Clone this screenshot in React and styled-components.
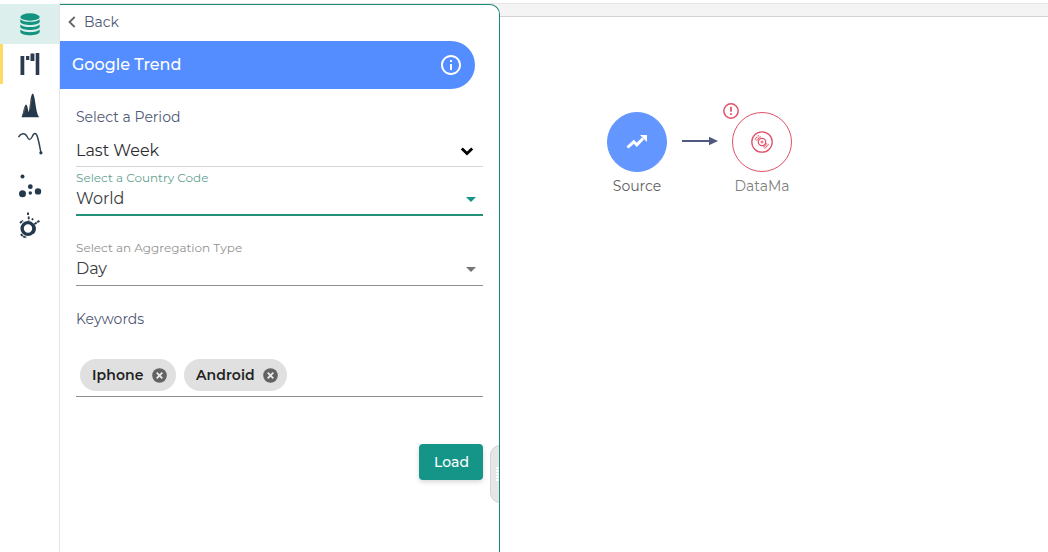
import React from "react";
import styled, { createGlobalStyle } from "styled-components";

const Global = createGlobalStyle`
  * { box-sizing: border-box; }
  body { margin: 0; background: #fff; font-family: Montserrat, Inter, "Liberation Sans", sans-serif; overflow: hidden; }
`;
const Page = styled.div`
  display: flex; height: 552px; width: 1048px; padding-top: 3px; overflow: hidden;
`;
const Rail = styled.nav`
  width: 60px; display: flex; flex-direction: column; border-right: 1px solid #e4e4e8; padding-top: 1px;
`;
const RailItem = styled.div`
  height: 40px; display: flex; align-items: center; justify-content: center;
  background: ${(p) => (p.$active ? "#dcefec" : "transparent")};
  border-left: 3px solid ${(p) => (p.$marked ? "#ffd966" : "transparent")};
  border-radius: ${(p) => (p.$marked ? "0 2px 2px 0" : "0")};
  svg { display: block; margin-left: -2px; margin-top: ${(p) => p.$drop || 0}px; }
`;
const Main = styled.div`
  flex: 1; position: relative; display: flex;
`;
const Panel = styled.section`
  width: 440px; margin-top: 1px; height: 560px; position: relative; overflow: hidden; z-index: 1;
  border-top: 1px solid #1c8a78; border-right: 1px solid #1c8a78; border-top-right-radius: 10px; background: #fff;
`;
const TopStrip = styled.div`
  position: absolute; left: 0; right: 0; top: 0; height: 14px;
  background: #f4f4f5; border-top: 1px solid #e6e6e8; border-bottom: 1px solid #d2d2d4;
`;
const Text = styled.span`
  display: block; white-space: nowrap;
  font-size: ${(p) => p.$size || 14}px; line-height: ${(p) => p.$lh || 20}px;
  font-weight: ${(p) => p.$weight || 400}; color: ${(p) => p.$color || "#505976"};
  letter-spacing: ${(p) => p.$track || 0}px;
`;
const BackRow = styled.div`
  height: 36px; display: flex; align-items: center; padding: 0 0 2px 8px; gap: 8px;
`;
const Header = styled.header`
  width: 415px; height: 48px; background: #548dff; border-radius: 0 24px 24px 0;
  display: flex; align-items: center; justify-content: space-between; padding: 0 12px;
`;
const Body = styled.div`
  padding: 18px 16px 0; display: flex; flex-direction: column;
`;
const Field = styled.div`
  height: ${(p) => p.$h}px; padding-top: ${(p) => p.$pt || 0}px;
  border-bottom: ${(p) => p.$bw || 1}px solid ${(p) => p.$line};
`;
const Value = styled.div`
  display: flex; justify-content: space-between; align-items: center; padding-right: ${(p) => p.$pr || 7}px;
  padding-top: 1px;
`;
const Chips = styled.div`
  display: flex; gap: 8px; height: 38px; margin-top: 7px; padding-left: 4px; border-bottom: 1px solid #8e8e8e;
`;
const Chip = styled.div`
  height: 32px; width: ${(p) => p.$w}px; border-radius: 16px; background: #e0e0e0; padding: 0 9.5px 0 12px;
  display: flex; align-items: center; justify-content: space-between;
`;
const LoadButton = styled.button`
  align-self: flex-end; width: 64px; height: 36px; margin-top: 47px; padding: 0 0 0 1px; border: 0; border-radius: 4px;
  background: #159588; font-family: inherit; display: flex; align-items: center; justify-content: center;
  box-shadow: 0 2px 5px rgba(0, 0, 0, 0.16);
`;
const Handle = styled.div`
  position: absolute; left: 430px; top: 440px; width: 20px; height: 58px; border-radius: 10px;
  background: #e6e6e6; border: 1px solid #d3d3d3; padding: 21px 0 0 5px;
`;
const Grip = styled.div`
  width: 10px; height: 15px;
  background: repeating-linear-gradient(#fff 0 2px, #e6e6e6 2px 3px);
`;
const Canvas = styled.main`
  flex: 1; position: relative;
`;
const Node = styled.div`
  position: absolute; left: ${(p) => p.$x}px; top: 109px; width: 60px;
  display: flex; flex-direction: column; align-items: center; gap: 4px;
`;
const Disc = styled.div`
  width: 60px; height: 60px; border-radius: 50%; display: flex; align-items: center; justify-content: center;
  background: ${(p) => p.$fill}; border: 1px solid ${(p) => p.$line};
`;
const Alert = styled.svg`
  position: absolute; left: -10px; top: -10px;
`;
const Arrow = styled.svg`
  position: absolute; left: 182px; top: 133px;
`;

const ink = "#25394d";

function Database() {
  return (
    <svg width="20" height="23" viewBox="0 0 20 23" fill="#139480">
      <ellipse cx="10" cy="4" rx="9.7" ry="3.7" />
      <path d="M.3 6.2C3 9.6 17 9.6 19.7 6.2V9C18.500 13 1.500 13 .3 9z" />
      <path d="M.3 11.400C3 14.800 17 14.800 19.700 11.400V14C18.500 18 1.500 18 .3 14z" />
      <path d="M.3 16.600C3 20 17 20 19.700 16.600V19C18.500 23.400 1.500 23.400 .3 19z" />
    </svg>
  );
}
function Waterfall() {
  return (
    <svg width="20" height="24" viewBox="0 0 20 24" fill="#2c3a50">
      <path d="M.5 4h3.800v19H.5zM6 4h3.300v4H6zM10.500 1.500h3.900V9h-3.900zM15.700 1h3.600v22h-3.600z" />
    </svg>
  );
}
function Peaks() {
  return (
    <svg width="20" height="26" viewBox="0 0 20 26" fill={ink}>
      <path d="M1.500 25.200C3.200 22 3.800 13.500 6 12.500C8 13.500 7.800 19 8.800 20C9.800 17 10.300 2 12.800 1.500C15.300 3 15.500 21 19.200 25.200z" />
      <path d="M3.600 21.500L5 15M9.800 17L11.200 7" stroke="#b98852" strokeWidth=".5" />
    </svg>
  );
}
function Curve() {
  return (
    <svg width="26" height="26" viewBox="0 0 26 26" fill="none" stroke="#2f4352" strokeWidth="1.500">
      <path d="M1.500 7C4 3 8 2.500 10 6.500C12 10.500 13 10.500 15 7C17 2.500 19 2 20.500 7C22 12 23 18 24 23" />
      <circle cx="23.900" cy="22.800" r="1.600" fill={ink} stroke="none" />
    </svg>
  );
}
function Dots() {
  return (
    <svg width="24" height="24" viewBox="0 0 24 24" fill={ink}>
      <circle cx="4.500" cy="2.500" r="2" />
      <circle cx="4.500" cy="19.700" r="3.500" />
      <circle cx="12.300" cy="12.700" r="2.400" />
      <circle cx="12.300" cy="19" r="1.700" />
      <circle cx="20" cy="17.400" r="3.200" />
    </svg>
  );
}
function Radial() {
  return (
    <svg width="24" height="28" viewBox="0 0 24 28" fill="none" stroke={ink}>
      <circle cx="10" cy="17.500" r="5.900" strokeWidth="3.400" />
      <path d="M15 13.500c2 3 1.800 6-.5 8.500" strokeWidth="3" />
      <path d="M10 1.500v3M10.700 5.500v4M14 9l1-1.500M16.500 13l5.500-3.500M2 12l3-2.500M3 23c1 2 3 3.200 5.500 3.300" strokeWidth="1.900" strokeDasharray="2.600 .6" />
    </svg>
  );
}

function Close() {
  return (
    <svg width="15" height="15" viewBox="0 0 15 15">
      <circle cx="7.500" cy="7.500" r="7.300" fill="#626262" />
      <path d="M4.700 4.700l5.600 5.600M10.300 4.700l-5.600 5.600" stroke="#e8e8e8" strokeWidth="1.900" />
    </svg>
  );
}
function Caret({ color }) {
  return (
    <svg width="10" height="5" viewBox="0 0 10 5"><path d="M0 0h10L5 5z" fill={color} /></svg>
  );
}

export default function App() {
  return (
    <>
      <Global />
      <Page>
        <Rail>
          <RailItem $active><Database /></RailItem>
          <RailItem $marked><Waterfall /></RailItem>
          <RailItem $drop={2}><Peaks /></RailItem>
          <RailItem $drop={-2}><Curve /></RailItem>
          <RailItem $drop={3}><Dots /></RailItem>
          <RailItem $drop={1}><Radial /></RailItem>
        </Rail>
        <Main>
          <TopStrip />
          <Panel>
            <BackRow>
              <svg width="8" height="12" viewBox="0 0 8 12" fill="none" stroke="#666" strokeWidth="1.800"><path d="M6.700 1L1.500 6l5.200 5" /></svg>
              <Text>Back</Text>
            </BackRow>
            <Header>
              <Text $size={16} $weight={500} $color="#fff">Google Trend</Text>
              <svg width="24" height="24" viewBox="0 0 24 24" fill="#fff">
                <path d="M11 7h2v2h-2zm0 4h2v6h-2zm1-9C6.480 2 2 6.480 2 12s4.480 10 10 10 10-4.480 10-10S17.520 2 12 2zm0 18c-4.410 0-8-3.590-8-8s3.590-8 8-8 8 3.590 8 8-3.590 8-8 8z" />
              </svg>
            </Header>
            <Body>
              <Text>Select a Period</Text>
              <Field $h={40} $pt={13} $line="#d6d6d6">
                <Value $pr={9}>
                  <Text $size={16} $color="#2c2c30">Last Week</Text>
                  <svg width="14" height="10" viewBox="0 0 14 10" fill="none" stroke="#000" strokeWidth="2.800"><path d="M1.800 2.500L7 7.500l5.200-5" /></svg>
                </Value>
              </Field>
              <Field $h={49} $pt={3} $bw={2} $line="#239079">
                <Text $size={12} $lh={16} $color="#64a191">Select a Country Code</Text>
                <Value>
                  <Text $size={16} $lh={24} $color="#3c3c40">World</Text>
                  <Caret color="#159588" />
                </Value>
              </Field>
              <Field $h={70} $pt={24} $line="#8e8e8e">
                <Text $size={12} $lh={16} $color="#929292">Select an Aggregation Type</Text>
                <Value>
                  <Text $size={16} $lh={24} $color="#3c3c40">Day</Text>
                  <Caret color="#757575" />
                </Value>
              </Field>
              <Text $lh={66}>Keywords</Text>
              <Chips>
                <Chip $w={96}><Text $weight={600} $color="#222" $track={0.1}>Iphone</Text><Close /></Chip>
                <Chip $w={103}><Text $weight={600} $color="#222" $track={0.1}>Android</Text><Close /></Chip>
              </Chips>
              <LoadButton><Text $weight={500} $color="#fff">Load</Text></LoadButton>
            </Body>
            <Handle><Grip /></Handle>
          </Panel>
          <Canvas>
            <Node $x={107}>
              <Disc $fill="#6396ff" $line="#6396ff">
                <svg width="22" height="18" viewBox="0 0 22 18" fill="none">
                  <path d="M1.500 14.500L7.800 8.800l3 3L17 5.500" stroke="#fff" strokeWidth="3" />
                  <path d="M14 2h7v7z" fill="#fff" />
                </svg>
              </Disc>
              <Text $color="#606060">Source</Text>
            </Node>
            <Arrow width="36" height="10" viewBox="0 0 36 10">
              <path d="M0 5h28" stroke="#4f5980" strokeWidth="2" /><path d="M27 .7L36 5l-9 4.300z" fill="#4f5980" />
            </Arrow>
            <Node $x={232}>
              <Disc $fill="#fff" $line="#df5269">
                <svg width="22" height="22" viewBox="0 0 22 22" fill="none" stroke="#df5269">
                  <circle cx="11" cy="11" r="10.200" strokeWidth="1.300" />
                  <circle cx="11" cy="11" r="3.700" strokeWidth="1.300" />
                  <circle cx="11" cy="11" r="1" />
                  <path d="M3.800 8.500L8 4M5.500 9.500L9.500 5.500M13.500 17.500L18 13M12.500 16L16 12.500" strokeWidth="1.100" strokeDasharray="1.500 .6" />
                </svg>
              </Disc>
              <Text $color="#808080">DataMa</Text>
              <Alert width="18" height="18" viewBox="0 0 18 18" fill="none" stroke="#df5269">
                <circle cx="9" cy="9" r="7.200" strokeWidth="1.500" /><path d="M9 4.800v5M9 11.200v1.800" strokeWidth="1.700" />
              </Alert>
            </Node>
          </Canvas>
        </Main>
      </Page>
    </>
  );
}
